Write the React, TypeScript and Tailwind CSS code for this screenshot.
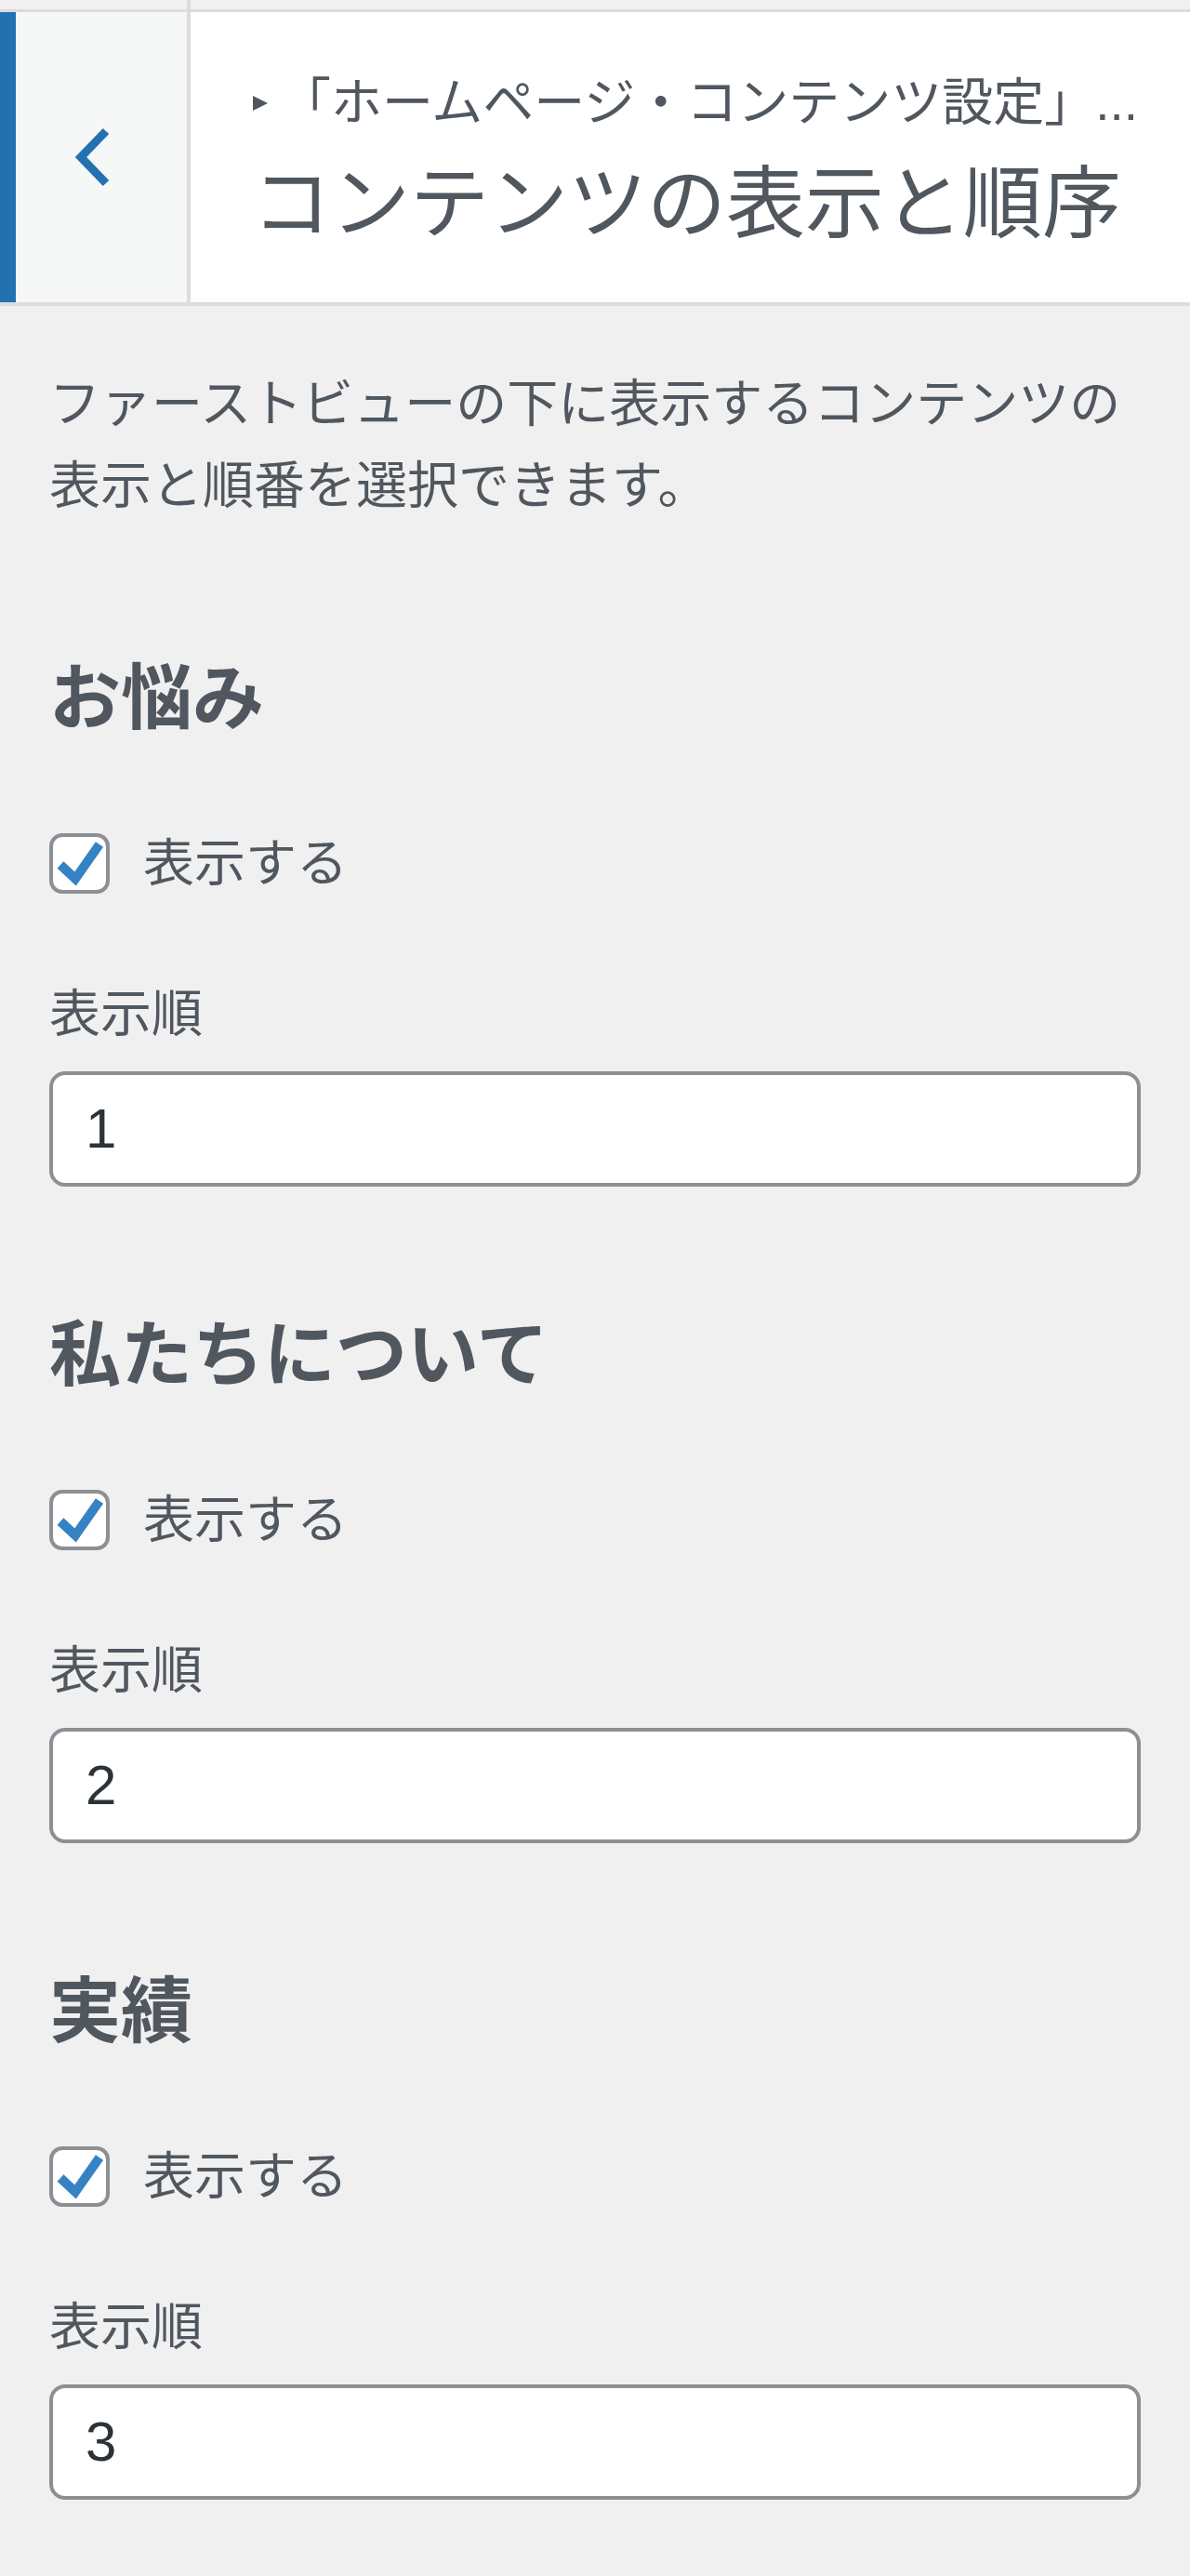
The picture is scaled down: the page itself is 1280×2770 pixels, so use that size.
const sections = [
  { title: "お悩み", order: "1" },
  { title: "私たちについて", order: "2" },
  { title: "実績", order: "3" },
];

function CheckBox() {
  return (
    <span className="flex h-[65px] w-[65px] items-center justify-center rounded-[14px] border-[4px] border-[#8c8f94] bg-white">
      <svg width="57" height="57" viewBox="0 0 57 57">
        <polyline
          points="8,30 24,45 50,8"
          fill="none"
          stroke="#3582c4"
          strokeWidth="10"
          strokeLinejoin="miter"
        />
      </svg>
    </span>
  );
}

function Section({ title, order, first }: { title: string; order: string; first: boolean }) {
  return (
    <div>
      <h3
        className={`${first ? "mt-[135px]" : "mt-[131px]"} text-[77px] font-bold leading-[100px] text-[#50575e]`}
      >
        {title}
      </h3>
      <label className="mt-[95px] flex h-[65px] items-center gap-[36px]">
        <CheckBox />
        <span className="text-[55px] leading-[65px] text-[#50575e]">表示する</span>
      </label>
      <div className="mt-[85px] text-[55px] leading-[88px] text-[#50575e]">表示順</div>
      <div className="mt-[18px] flex h-[124px] items-center rounded-[17px] border-[4px] border-[#8c8f94] bg-white pl-[35px] text-[60px] text-[#2c3338]">
        {order}
      </div>
    </div>
  );
}

export default function App() {
  return (
    <div
      className="h-[2770px] w-[1280px] overflow-hidden bg-[#f0f0f1]"
      style={{ fontFamily: '"Liberation Sans", "Noto Sans CJK JP", sans-serif' }}
    >
      {/* top edge of previous panel */}
      <div className="flex h-[13px] border-b-[3px] border-[#dcdcde]">
        <div className="w-[201px]" />
        <div className="w-[4px] bg-[#dcdcde]" />
      </div>

      {/* section header */}
      <header className="flex h-[316px] border-b-[4px] border-[#dcdcde] bg-white">
        <div className="w-[17px] bg-[#2271b1]" />
        <button className="flex w-[188px] items-center border-r-[4px] border-[#dcdcde] bg-[#f6f7f7] pl-[60px]">
          <svg width="44" height="70" viewBox="0 0 44 70">
            <polyline
              points="37,7 10,35 37,63"
              fill="none"
              stroke="#2271b1"
              strokeWidth="9"
              strokeLinejoin="miter"
            />
          </svg>
        </button>
        <div className="flex-1 pl-[66px] text-[#50575e]">
          <div className="mt-[62px] flex h-[70px] items-center whitespace-nowrap text-[55px] leading-[70px]">
            <svg width="18" height="18" viewBox="0 0 18 18" className="mr-[12px] mt-[2px]">
              <polygon points="1,1 17,9 1,17" fill="#50575e" />
            </svg>
            <span>「ホームページ・コンテンツ設定」...</span>
          </div>
          <h2 className="mt-[25px] whitespace-nowrap text-[85px] leading-[100px]">
            コンテンツの表示と順序
          </h2>
        </div>
      </header>

      <main className="px-[53px]">
        <p className="mt-[61px] text-[55px] leading-[88px] text-[#50575e]">
          ファーストビューの下に表示するコンテンツの
          <br />
          表示と順番を選択できます。
        </p>
        {sections.map((s, i) => (
          <Section key={s.title} title={s.title} order={s.order} first={i === 0} />
        ))}
      </main>
    </div>
  );
}
